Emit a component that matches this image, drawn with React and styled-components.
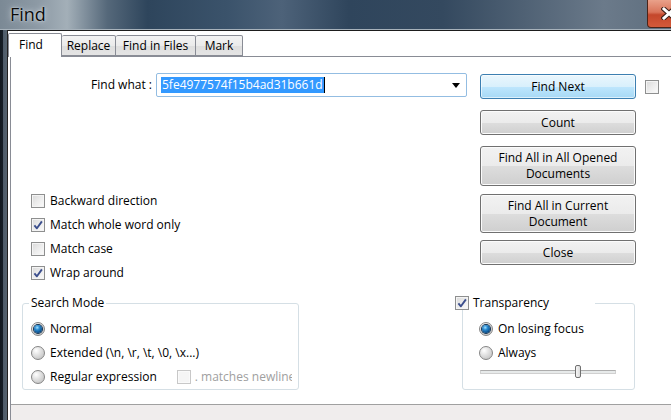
import React from "react";
import styled, { createGlobalStyle } from "styled-components";

const GlobalStyle = createGlobalStyle`
  html, body {
    margin: 0;
    padding: 0;
    overflow: hidden;
    background: #1c2632;
  }
  body {
    font-family: "Open Sans", "Noto Sans", sans-serif;
    font-size: 12px;
    color: #000;
  }
`;

const Window = styled.div`
  width: 671px;
  height: 420px;
  display: flex;
  flex-direction: column;
  overflow: hidden;
`;

const TitleBar = styled.div`
  height: 30px;
  flex: none;
  display: flex;
  justify-content: space-between;
  align-items: flex-start;
  background: linear-gradient(
    90deg,
    #7b8995 0%,
    #8e9ba6 6%,
    #a3afb8 10%,
    #55687a 16%,
    #2e455c 22%,
    #3b536b 34%,
    #4d6279 42%,
    #2f455c 52%,
    #34495f 66%,
    #4f6174 78%,
    #6b7a8a 90%,
    #5e6e7e 100%
  );
  box-shadow: inset 0 -1px 0 #a7b2bb;
`;

const Title = styled.div`
  padding: 3px 0 0 10px;
  font-size: 18px;
  line-height: 22px;
  color: #0b0b0b;
  text-shadow: 0 0 6px rgba(220, 230, 238, 0.95), 0 0 2px rgba(230, 236, 240, 0.9);
`;

const CloseButton = styled.div`
  width: 44px;
  height: 28px;
  margin-right: -20px;
  flex: none;
  box-sizing: border-box;
  border: 1px solid #4a2419;
  border-top: none;
  border-radius: 0 0 0 4px;
  background: linear-gradient(#e9a18a 0%, #d9745a 45%, #c4472b 55%, #d35a3a 100%);
  display: flex;
  align-items: center;
  justify-content: center;
`;

const Body = styled.div`
  flex: 1;
  display: flex;
`;

const LeftFrame = styled.div`
  width: 8px;
  flex: none;
  background: linear-gradient(90deg, #121920 0px, #161e27 3px, #4c5a68 3px, #56636f 7px, #202020 7px);
`;

const Client = styled.div`
  flex: 1;
  display: flex;
  flex-direction: column;
  background: #fff;
  border-top: 1px solid #1d1d1d;
  padding-left: 2px;
`;

const TabStrip = styled.div`
  height: 25px;
  flex: none;
  display: flex;
  align-items: flex-end;
  margin-left: -2px;
  position: relative;
  z-index: 1;
`;

const Tab = styled.div`
  width: ${(p) => p.$w}px;
  height: ${(p) => (p.$active ? 24 : 21)}px;
  margin-bottom: ${(p) => (p.$active ? -1 : 0)}px;
  box-sizing: border-box;
  border: 1px solid #898c95;
  border-bottom: ${(p) => (p.$active ? "none" : "1px solid #898c95")};
  border-left: ${(p) => (p.$first || p.$active ? "1px solid #898c95" : "none")};
  border-radius: 2px 2px 0 0;
  background: ${(p) => (p.$active ? "#fff" : "linear-gradient(#f3f3f3 0%, #ebebeb 50%, #dedede 51%, #e4e4e4 100%)")};
  display: flex;
  align-items: center;
  justify-content: ${(p) => (p.$active ? "flex-start" : "center")};
  padding-left: ${(p) => (p.$active ? 10 : 0)}px;
  padding-bottom: ${(p) => (p.$active ? 1 : 0)}px;
  line-height: 16px;
  white-space: nowrap;
`;

const Sheet = styled.div`
  flex: 1;
  display: flex;
  flex-direction: column;
  border-left: 1px solid #898c95;
`;

const Pane = styled.div`
  height: 347px;
  flex: none;
  display: flex;
  flex-direction: column;
  background: #fff;
  border-top: 1px solid #898c95;
  border-bottom: 1px solid #a0a0a0;
`;

const Footer = styled.div`
  flex: 1;
  background: #f0eded;
`;

const TopArea = styled.div`
  display: flex;
`;

const LeftCol = styled.div`
  width: 469px;
  flex: none;
  display: flex;
  flex-direction: column;
`;

const FindRow = styled.div`
  margin-top: 16px;
  height: 24px;
  display: flex;
  align-items: center;
  gap: 4px;
`;

const FieldLabel = styled.div`
  width: 141px;
  text-align: right;
  line-height: 16px;
`;

const Combo = styled.div`
  width: 311px;
  height: 24px;
  box-sizing: border-box;
  border: 1px solid #93bde2;
  border-radius: 2px;
  display: flex;
  align-items: center;
  padding: 0 6px 0 4px;
`;

const Selection = styled.span`
  background: #3399ff;
  color: #fff;
  line-height: 16px;
  padding: 0 1px;
  border-right: 1px solid #000;
`;

const ComboArrow = styled.svg`
  margin-left: auto;
  width: 8px;
  height: 5px;
`;

const Checks = styled.div`
  margin-top: 92px;
  padding-left: 20px;
  display: flex;
  flex-direction: column;
`;

const OptionRow = styled.div`
  height: 24px;
  display: flex;
  align-items: center;
  gap: 5px;
  line-height: 16px;
  white-space: nowrap;
`;

const Box = styled.span`
  width: 14px;
  height: 14px;
  flex: none;
  box-sizing: border-box;
  border: 1px solid ${(p) => (p.$disabled ? "#c8c8c8" : "#8e8f8f")};
  background: ${(p) =>
    p.$disabled ? "#f5f5f5" : "linear-gradient(135deg, #d9d9d9 0%, #ececec 50%, #fbfbfb 100%)"};
  box-shadow: inset 0 0 0 1px ${(p) => (p.$disabled ? "#fafafa" : "#f4f4f4")};
  display: flex;
  align-items: center;
  justify-content: center;
`;

const Radio = styled.span`
  width: 14px;
  height: 14px;
  flex: none;
  box-sizing: border-box;
  border-radius: 50%;
  border: 1px solid #858585;
  background: radial-gradient(circle at 35% 30%, #ffffff 0%, #e2e2e2 40%, #b9b9b9 100%);
  display: flex;
  align-items: center;
  justify-content: center;
  &::after {
    content: "";
    display: ${(p) => (p.$on ? "block" : "none")};
    width: 8px;
    height: 8px;
    border-radius: 50%;
    background: radial-gradient(circle at 40% 32%, #9fe0ff 0%, #2a8ad0 32%, #0a4f8c 70%, #062f55 100%);
    box-shadow: 0 0 0 1px #10304f;
  }
`;

const ButtonCol = styled.div`
  margin-top: 17px;
  display: flex;
  flex-direction: column;
`;

const ButtonRow = styled.div`
  display: flex;
  align-items: center;
  gap: 9px;
`;

const Button = styled.div`
  width: 156px;
  height: ${(p) => p.$h}px;
  margin-top: ${(p) => p.$mt || 0}px;
  flex: none;
  box-sizing: border-box;
  border: 1px solid ${(p) => (p.$primary ? "#3c7fb1" : "#707070")};
  border-radius: 3px;
  background: ${(p) =>
    p.$primary
      ? "linear-gradient(#eaf6fd 0%, #d9f0fc 50%, #bee6fd 51%, #a7d9f5 100%)"
      : "linear-gradient(#f2f2f2 0%, #ebebeb 50%, #dddddd 51%, #cfcfcf 100%)"};
  box-shadow: inset 0 0 0 1px ${(p) => (p.$primary ? "rgba(255,255,255,0.6)" : "#fbfbfb")};
  display: flex;
  align-items: center;
  justify-content: center;
  text-align: center;
  line-height: 16px;
`;

const GroupsRow = styled.div`
  margin-top: 18px;
  display: flex;
  align-items: flex-start;
`;

const Group = styled.div`
  position: relative;
  width: ${(p) => p.$w}px;
  height: 87px;
  margin-left: ${(p) => p.$ml}px;
  box-sizing: border-box;
  border: 1px solid #d5dfe5;
  border-radius: 3px;
  padding: 13px 0 0 ${(p) => p.$pl}px;
  display: flex;
  flex-direction: column;
`;

const GroupTitle = styled.div`
  position: absolute;
  top: -8px;
  left: ${(p) => p.$left}px;
  width: ${(p) => (p.$w ? `${p.$w}px` : "auto")};
  box-sizing: border-box;
  padding: 0 2px;
  background: #fff;
  line-height: 14px;
  display: flex;
  align-items: center;
  gap: ${(p) => (p.$w ? 4 : 0)}px;
  padding-left: ${(p) => (p.$w ? 0 : 2)}px;
`;

const SubOption = styled.div`
  width: 115px;
  margin-left: 15px;
  overflow: hidden;
  display: flex;
  align-items: center;
  gap: 4px;
  color: #a0a0a0;
`;

const Slider = styled.div`
  position: relative;
  width: 136px;
  height: 13px;
  margin-left: 1px;
  display: flex;
  align-items: center;
`;

const Track = styled.div`
  width: 100%;
  height: 4px;
  box-sizing: border-box;
  border: 1px solid #d0d0d0;
  border-top-color: #adadad;
  background: #e7eaea;
`;

const Thumb = styled.div`
  position: absolute;
  left: 95px;
  top: 0;
  width: 6px;
  height: 13px;
  box-sizing: border-box;
  border: 1px solid #707070;
  border-radius: 2px;
  background: linear-gradient(90deg, #f6f6f6, #dcdcdc);
`;

const Check = () => (
  <svg width="10" height="10" viewBox="0 0 10 10">
    <path d="M1.4 5.4 L3.9 8.3 L8.9 1.4" fill="none" stroke="#3c4f8d" strokeWidth="1.9" strokeLinejoin="round" />
  </svg>
);

const CheckBox = ({ checked, disabled }) => (
  <Box $disabled={disabled}>{checked && <Check />}</Box>
);

const CheckOption = ({ checked, children }) => (
  <OptionRow>
    <CheckBox checked={checked} />
    <span>{children}</span>
  </OptionRow>
);

const RadioOption = ({ on, children, extra }) => (
  <OptionRow>
    <Radio $on={on} />
    <span>{children}</span>
    {extra}
  </OptionRow>
);

const tabs = [
  { label: "Find", w: 54, active: true },
  { label: "Replace", w: 54 },
  { label: "Find in Files", w: 80 },
  { label: "Mark", w: 47 },
];

export default function App() {
  return (
    <>
      <GlobalStyle />
      <Window>
        <TitleBar>
          <Title>Find</Title>
          <CloseButton>
            <svg width="16" height="13" viewBox="0 0 16 13">
              <path d="M3 2 L13 11 M13 2 L3 11" stroke="#3b1f18" strokeWidth="5" strokeLinecap="square" />
              <path d="M3 2 L13 11 M13 2 L3 11" stroke="#fff" strokeWidth="3" strokeLinecap="square" />
            </svg>
          </CloseButton>
        </TitleBar>
        <Body>
          <LeftFrame />
          <Client>
            <TabStrip>
              {tabs.map((t, i) => (
                <Tab key={t.label} $w={t.w} $active={t.active} $first={i === 0}>
                  {t.label}
                </Tab>
              ))}
            </TabStrip>
            <Sheet>
              <Pane>
                <TopArea>
                  <LeftCol>
                    <FindRow>
                      <FieldLabel>Find what :</FieldLabel>
                      <Combo>
                        <Selection>5fe4977574f15b4ad31b661d</Selection>
                        <ComboArrow viewBox="0 0 8 5">
                          <path d="M0 0 H8 L4 5 Z" fill="#000" />
                        </ComboArrow>
                      </Combo>
                    </FindRow>
                    <Checks>
                      <CheckOption>Backward direction</CheckOption>
                      <CheckOption checked>Match whole word only</CheckOption>
                      <CheckOption>Match case</CheckOption>
                      <CheckOption checked>Wrap around</CheckOption>
                    </Checks>
                  </LeftCol>
                  <ButtonCol>
                    <ButtonRow>
                      <Button $h={25} $primary>Find Next</Button>
                      <CheckBox />
                    </ButtonRow>
                    <Button $h={25} $mt={11}>Count</Button>
                    <Button $h={40} $mt={11}>
                      Find All in All Opened
                      <br />
                      Documents
                    </Button>
                    <Button $h={39} $mt={8}>
                      Find All in Current
                      <br />
                      Document
                    </Button>
                    <Button $h={25} $mt={7}>Close</Button>
                  </ButtonCol>
                </TopArea>
                <GroupsRow>
                  <Group $w={277} $ml={11} $pl={8}>
                    <GroupTitle $left={6}>Search Mode</GroupTitle>
                    <RadioOption on>Normal</RadioOption>
                    <RadioOption>Extended (\n, \r, \t, \0, \x...)</RadioOption>
                    <RadioOption
                      extra={
                        <SubOption>
                          <CheckBox disabled />
                          <span>. matches newline</span>
                        </SubOption>
                      }
                    >
                      Regular expression
                    </RadioOption>
                  </Group>
                  <Group $w={173} $ml={163} $pl={16}>
                    <GroupTitle $left={-8} $w={140}>
                      <CheckBox checked />
                      <span>Transparency</span>
                    </GroupTitle>
                    <RadioOption on>On losing focus</RadioOption>
                    <RadioOption>Always</RadioOption>
                    <Slider>
                      <Track />
                      <Thumb />
                    </Slider>
                  </Group>
                </GroupsRow>
              </Pane>
              <Footer />
            </Sheet>
          </Client>
        </Body>
      </Window>
    </>
  );
}
